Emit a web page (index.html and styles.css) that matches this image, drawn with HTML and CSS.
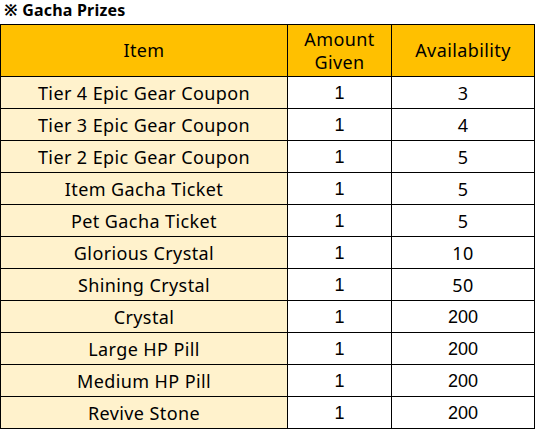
FILE: index.html
```html
<!DOCTYPE html>
<html>
<head>
<meta charset="utf-8">
<link rel="stylesheet" href="styles.css">
</head>
<body>
<div class="title">※ Gacha Prizes</div>
<table class="prizes">
  <colgroup>
    <col class="c-item">
    <col class="c-amt">
    <col class="c-avail">
  </colgroup>
  <thead>
    <tr><th>Item</th><th>Amount<br>Given</th><th>Availability</th></tr>
  </thead>
  <tbody>
    <tr><td class="name">Tier 4 Epic Gear Coupon</td><td class="num">1</td><td class="avail">3</td></tr>
    <tr><td class="name">Tier 3 Epic Gear Coupon</td><td class="num">1</td><td class="avail">4</td></tr>
    <tr><td class="name">Tier 2 Epic Gear Coupon</td><td class="num">1</td><td class="avail">5</td></tr>
    <tr><td class="name">Item Gacha Ticket</td><td class="num">1</td><td class="avail">5</td></tr>
    <tr><td class="name">Pet Gacha Ticket</td><td class="num">1</td><td class="avail">5</td></tr>
    <tr><td class="name">Glorious Crystal</td><td class="num">1</td><td class="avail">10</td></tr>
    <tr><td class="name">Shining Crystal</td><td class="num">1</td><td class="avail">50</td></tr>
    <tr><td class="name">Crystal</td><td class="num">1</td><td class="avail num">200</td></tr>
    <tr><td class="name">Large HP Pill</td><td class="num">1</td><td class="avail num">200</td></tr>
    <tr><td class="name">Medium HP Pill</td><td class="num">1</td><td class="avail num">200</td></tr>
    <tr><td class="name">Revive Stone</td><td class="num">1</td><td class="avail num">200</td></tr>
  </tbody>
</table>
</body>
</html>
```
FILE: styles.css
```css
html, body {
  margin: 0;
  padding: 0;
  background: #ffffff;
}
body {
  font-family: "Noto Sans", "Noto Sans CJK KR", sans-serif;
  color: #000;
}
.title {
  height: 24px;
  line-height: 20px;
  padding-left: 4px;
  font-size: 16px;
  font-weight: bold;
  letter-spacing: 0.2px;
}
.prizes {
  border-collapse: collapse;
  width: 534px;
  table-layout: fixed;
}
.c-item { width: 287px; }
.c-amt { width: 104px; }
.c-avail { width: 143px; }
.prizes th, .prizes td {
  border: 1px solid #000;
  padding: 0;
  text-align: center;
  font-size: 18px;
  font-weight: normal;
  letter-spacing: 0.4px;
}
.prizes th {
  background: #ffc000;
  height: 51px;
  line-height: 23px;
}
.prizes td {
  height: 31px;
  line-height: 20px;
}
.prizes td.name {
  background: #fff2cc;
}
.prizes td.num {
  font-family: "Liberation Sans", Arial, sans-serif;
  letter-spacing: 0;
}
```
